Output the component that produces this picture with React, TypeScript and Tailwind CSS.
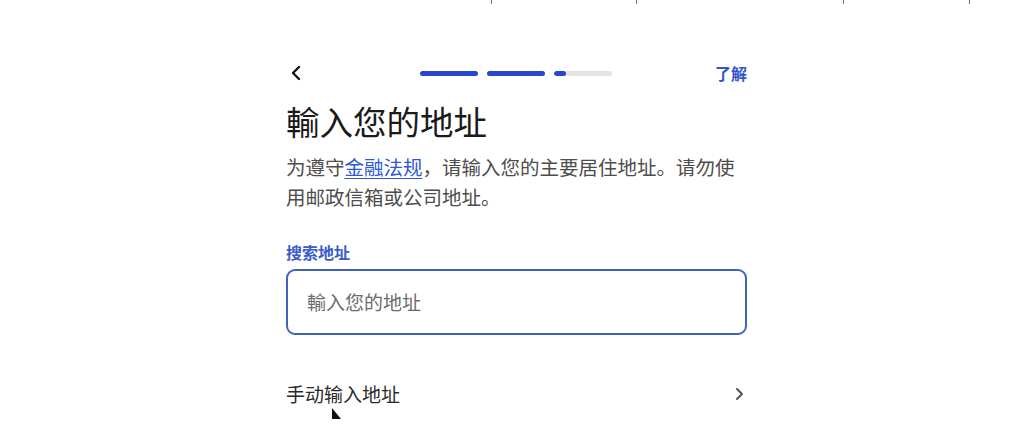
import React from 'react';

const font = { fontFamily: '"Noto Sans CJK SC", "Noto Sans", sans-serif' };

function ProgressBars() {
  return (
    <div className="flex items-center gap-[9px]">
      <div className="h-[5px] w-[58px] rounded-full bg-[#2946cf]" />
      <div className="h-[5px] w-[58px] rounded-full bg-[#2946cf]" />
      <div className="flex h-[5px] w-[58px] overflow-hidden rounded-full bg-[#e3e3e3]">
        <div className="h-full w-[12px] rounded-full bg-[#2946cf]" />
      </div>
    </div>
  );
}

export default function App() {
  const ticks = [491, 636, 843, 969];

  return (
    <div className="relative h-[445px] w-[1010px] overflow-hidden bg-white" style={font}>
      {ticks.map((x) => (
        <span key={x} className="absolute top-0 h-[4px] w-[1px] bg-[#4d8a6e]" style={{ left: x }} />
      ))}

      <div className="ml-[286px] w-[461px] pt-[60px]">
        <div className="flex h-[26px] items-center justify-between">
          <svg width="14" height="16" viewBox="0 0 14 16" className="ml-[3px]">
            <polyline points="10,2 4,8 10,14" fill="none" stroke="#111" strokeWidth="2.4" strokeLinecap="round" strokeLinejoin="round" />
          </svg>
          <div className="ml-[14px]">
            <ProgressBars />
          </div>
          <span className="text-[16px] font-bold leading-[22px] text-[#3355cc]">了解</span>
        </div>

        <h1 className="mt-[14px] text-[33.5px] font-normal leading-[41px] text-[#1a1a1a]">輸入您的地址</h1>

        <p className="mt-[11px] text-[19.5px] leading-[30px] text-[#4d4d4d]">
          为遵守<span className="text-[#2b58d6] underline underline-offset-[3px]">金融法规</span>，请输入您的主要居住地址。请勿使
          <br />
          用邮政信箱或公司地址。
        </p>

        <div className="mt-[29px] text-[16px] font-bold leading-[22px] text-[#3a5cc9]">搜索地址</div>

        <div className="mt-[6px] flex h-[66px] items-center rounded-[9px] border-2 border-[#4262bf] pl-[19px]">
          <span className="text-[19px] text-[#6b6b6b]">輸入您的地址</span>
        </div>

        <div className="relative mt-[45px] flex h-[28px] items-center justify-between">
          <span className="text-[19px] leading-[28px] text-[#2a2a2a]">手动输入地址</span>
          <svg width="10" height="14" viewBox="0 0 10 14" className="mr-[3px]">
            <polyline points="3,2 8,7 3,12" fill="none" stroke="#555" strokeWidth="2" strokeLinecap="round" strokeLinejoin="round" />
          </svg>
          <svg width="12" height="14" viewBox="0 0 12 14" className="absolute left-[45px] top-[27px]">
            <polygon points="1,1 1,12 10,12" fill="#111" />
          </svg>
        </div>
      </div>
    </div>
  );
}
